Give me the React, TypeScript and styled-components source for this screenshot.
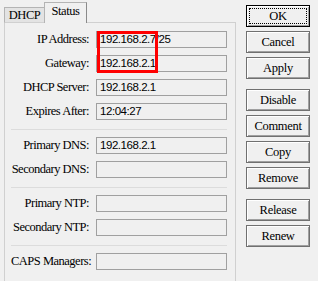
import styled, { createGlobalStyle } from 'styled-components';

const Global = createGlobalStyle`
  html, body { margin: 0; padding: 0; background: #f0f0f0; overflow: hidden; }
  #root { width: 318px; height: 281px; }
`;

const Page = styled.div`
  position: relative;
  display: flex;
  gap: 10px;
  height: 281px;
  padding: 2px 0 0 4px;
  box-sizing: border-box;
  overflow: hidden;
  font-family: "Liberation Serif", serif;
  color: #000;
`;

const TabWidget = styled.div`
  width: 232px;
  display: flex;
  flex-direction: column;
`;

const TabBar = styled.div`
  display: flex;
  align-items: flex-end;
  height: 21px;
  margin-bottom: -1px;
  position: relative;
  z-index: 1;
`;

const Tab = styled.div<{ $active?: boolean }>`
  box-sizing: border-box;
  height: ${p => (p.$active ? '21px' : '16px')};
  width: ${p => (p.$active ? '43px' : '41px')};
  margin-right: ${p => (p.$active ? '0' : '-1px')};
  background: ${p => (p.$active ? '#f0f0f0' : '#e3e3e3')};
  border: 1px solid #b4b4b4;
  border-bottom: ${p => (p.$active ? 'none' : '1px solid #d0d0d0')};
  border-right-color: ${p => (p.$active ? '#8a8a8a' : '#b4b4b4')};
  display: flex;
  align-items: center;
  justify-content: center;
  font-size: 12.5px;
  letter-spacing: -0.4px;
  padding-top: ${p => (p.$active ? '0' : '1px')};
  padding-bottom: ${p => (p.$active ? '3px' : '0')};
`;

const Panel = styled.div`
  flex: 1;
  border: 1px solid #d0d0d0;
  border-bottom: none;
  padding: 8px 8px 0 6px;
  display: flex;
  flex-direction: column;
`;

const Group = styled.div`
  display: flex;
  flex-direction: column;
  gap: 7px;
`;

const Row = styled.div`
  display: flex;
  align-items: center;
  gap: 7px;
  height: 17px;
`;

const Label = styled.div`
  width: 78px;
  text-align: right;
  font-size: 12.5px;
  letter-spacing: -0.5px;
  white-space: nowrap;
`;

const Field = styled.div`
  box-sizing: border-box;
  width: 131px;
  height: 17px;
  border: 1px solid #a0a0a0;
  background: #f0f0f0;
  padding: 0 3px;
  font-family: "Liberation Sans", Arial, sans-serif;
  font-size: 11.5px;
  letter-spacing: -0.45px;
  line-height: 15px;
  white-space: nowrap;
  overflow: hidden;
`;

const Separator = styled.div`
  height: 1px;
  background: #dcdcdc;
  margin: 9px 0 7px;
`;

const ButtonColumn = styled.div`
  display: flex;
  flex-direction: column;
  gap: 4px;
  padding-top: 3px;
`;

const Button = styled.button<{ $default?: boolean; $gapBefore?: boolean }>`
  box-sizing: border-box;
  width: 64px;
  height: 22px;
  margin: ${p => (p.$gapBefore ? '6px 0 0' : '0')};
  padding: 0;
  background: #f0f0f0;
  border: 1px solid ${p => (p.$default ? '#000' : '#707070')};
  box-shadow: inset 1px 1px #fff, inset -1px -1px #a0a0a0;
  outline: ${p => (p.$default ? '1px dotted #000' : 'none')};
  outline-offset: -4px;
  font-family: "Liberation Serif", serif;
  font-size: 12.5px;
  letter-spacing: -0.3px;
  color: #000;
`;

const Highlight = styled.div`
  position: absolute;
  left: 97px;
  top: 31px;
  width: 61px;
  height: 42px;
  box-sizing: border-box;
  border: 3px solid #ff0000;
  pointer-events: none;
`;

type Item = { label: string; value: string };

const groups: Item[][] = [
  [
    { label: 'IP Address:', value: '192.168.2.7/25' },
    { label: 'Gateway:', value: '192.168.2.1' },
    { label: 'DHCP Server:', value: '192.168.2.1' },
    { label: 'Expires After:', value: '12:04:27' },
  ],
  [
    { label: 'Primary DNS:', value: '192.168.2.1' },
    { label: 'Secondary DNS:', value: '' },
  ],
  [
    { label: 'Primary NTP:', value: '' },
    { label: 'Secondary NTP:', value: '' },
  ],
  [{ label: 'CAPS Managers:', value: '' }],
];

const buttons = [
  { text: 'OK', def: true },
  { text: 'Cancel' },
  { text: 'Apply' },
  { text: 'Disable', gap: true },
  { text: 'Comment' },
  { text: 'Copy' },
  { text: 'Remove' },
  { text: 'Release', gap: true },
  { text: 'Renew' },
];

export default function App() {
  return (
    <>
      <Global />
      <Page>
        <TabWidget>
          <TabBar>
            <Tab>DHCP</Tab>
            <Tab $active>Status</Tab>
          </TabBar>
          <Panel>
            {groups.map((g, i) => (
              <div key={i}>
                {i > 0 && <Separator />}
                <Group>
                  {g.map(item => (
                    <Row key={item.label}>
                      <Label>{item.label}</Label>
                      <Field>{item.value}</Field>
                    </Row>
                  ))}
                </Group>
              </div>
            ))}
          </Panel>
        </TabWidget>
        <ButtonColumn>
          {buttons.map(b => (
            <Button key={b.text} $default={b.def} $gapBefore={b.gap}>{b.text}</Button>
          ))}
        </ButtonColumn>
        <Highlight />
      </Page>
    </>
  );
}
